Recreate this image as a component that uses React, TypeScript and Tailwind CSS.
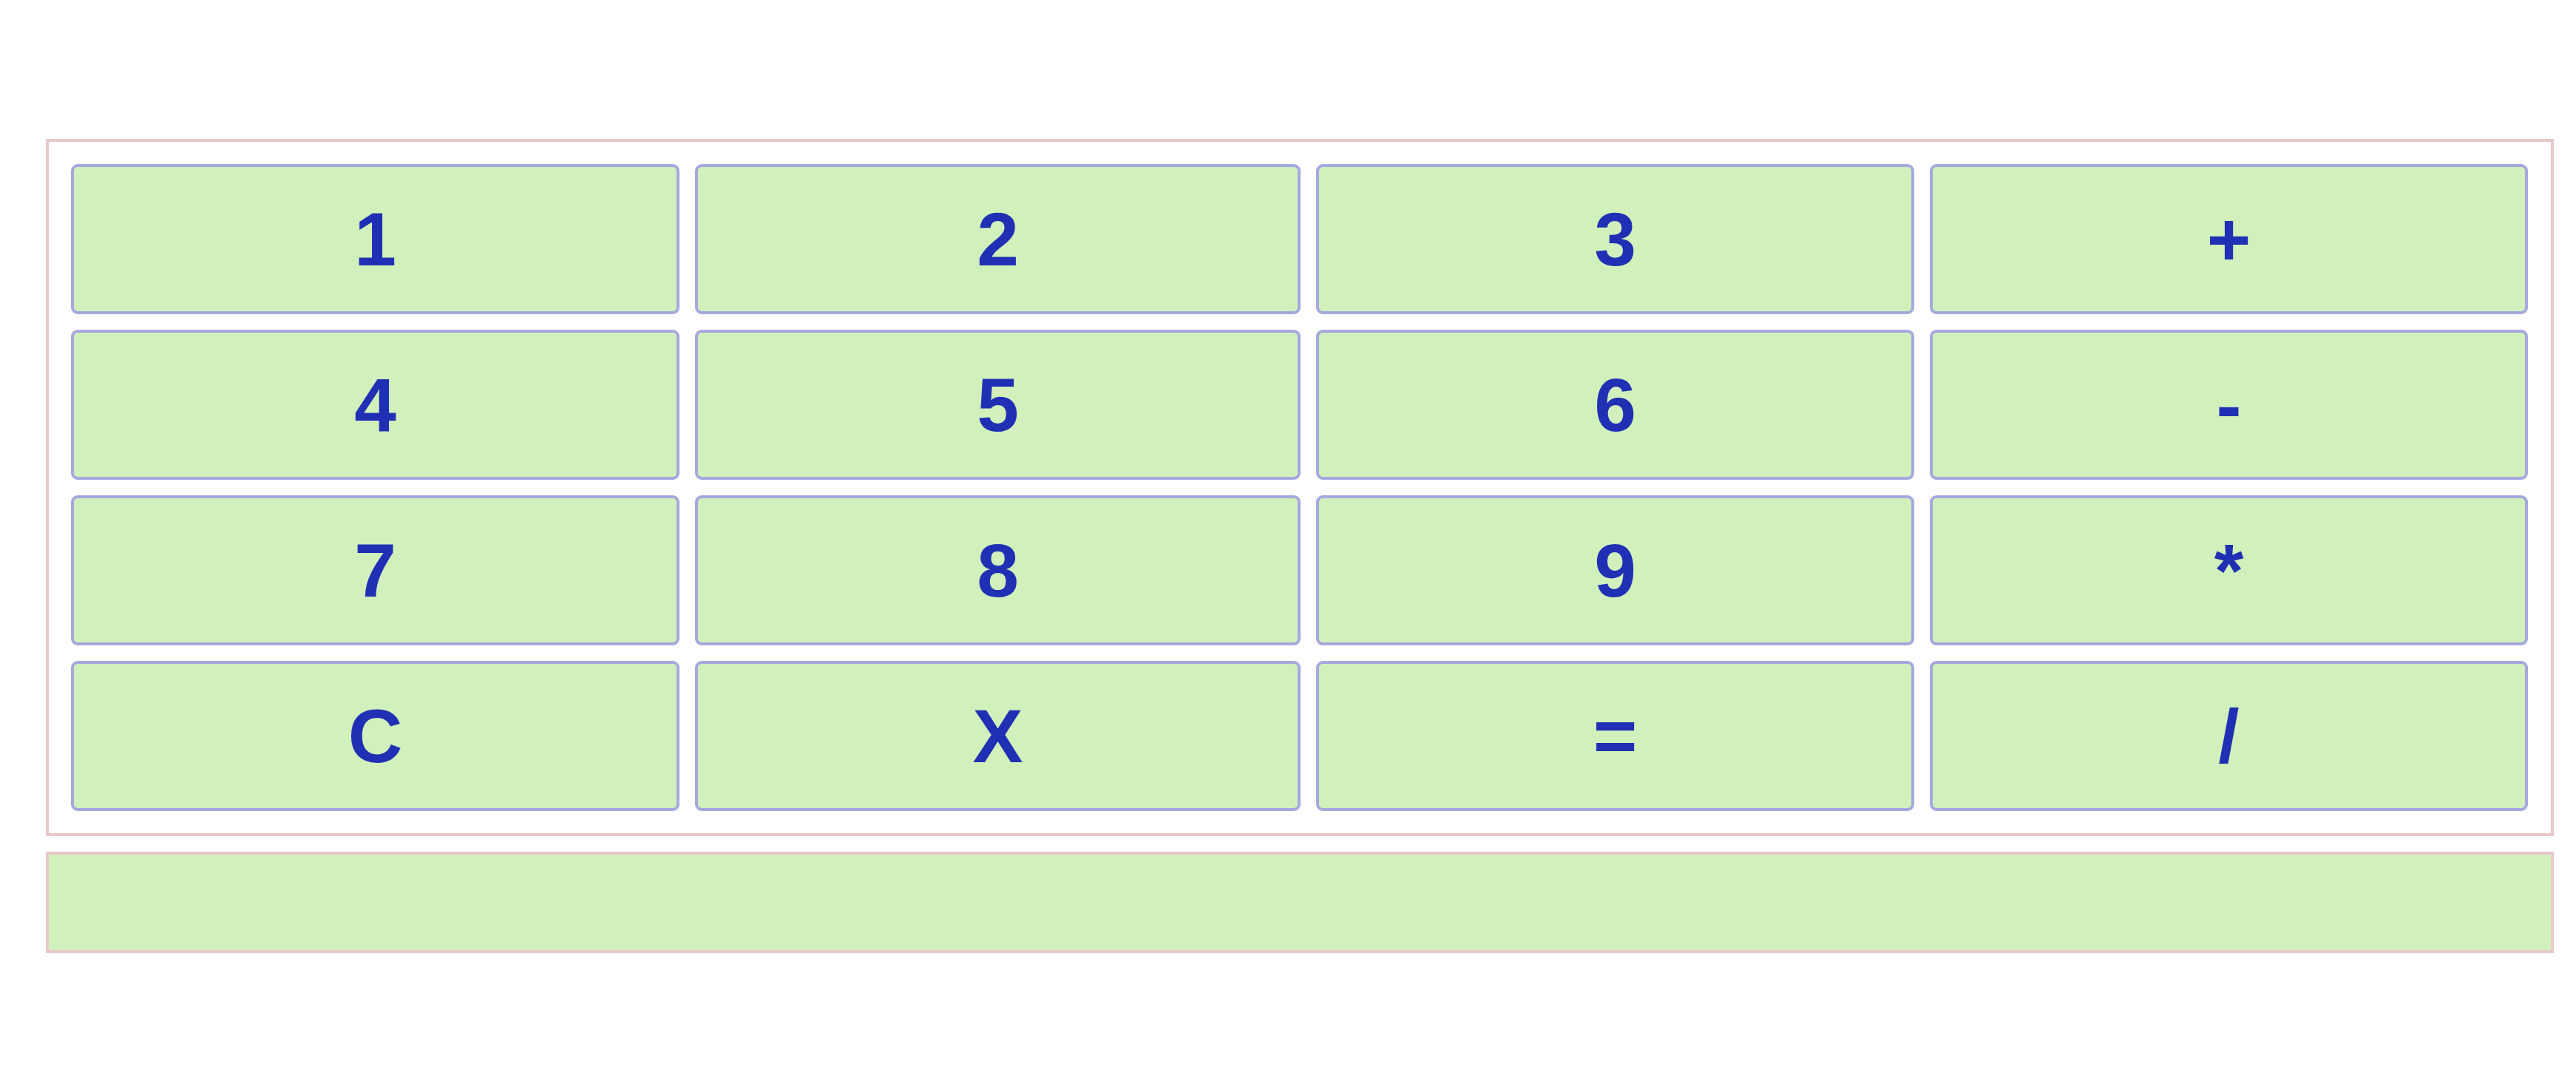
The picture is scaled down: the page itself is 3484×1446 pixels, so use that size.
import React from 'react';

const keys: string[] = ['1', '2', '3', '+', '4', '5', '6', '-', '7', '8', '9', '*', 'C', 'X', '=', '/'];

const App: React.FC = () => {
  return (
    <div className="min-h-screen bg-white pt-[188px] pl-[62px] [font-family:'Liberation_Sans',Arial,Helvetica,sans-serif]">
      {/* keypad */}
      <div className="w-[3392px] border-4 border-[#e8c8c8] pt-[30px] pb-[30px] pl-[30px] pr-[31px]">
        <div className="grid grid-cols-[823px_819px_809px_809px] gap-[21px]">
          {keys.map((k) => (
            <button
              key={k}
              className="h-[203px] rounded-[9px] border-4 border-[#a5a8de] bg-[#d1f0bb] [font-family:'Liberation_Sans',Arial,Helvetica,sans-serif] text-[102px] font-bold leading-none text-[#1f30b5] flex items-center justify-center"
            >
              {k}
            </button>
          ))}
        </div>
      </div>

      {/* display */}
      <div className="mt-[21px] w-[3392px] h-[137px] border-4 border-[#e8c8c8] bg-[#d1f0bb]" />
    </div>
  );
};

export default App;
